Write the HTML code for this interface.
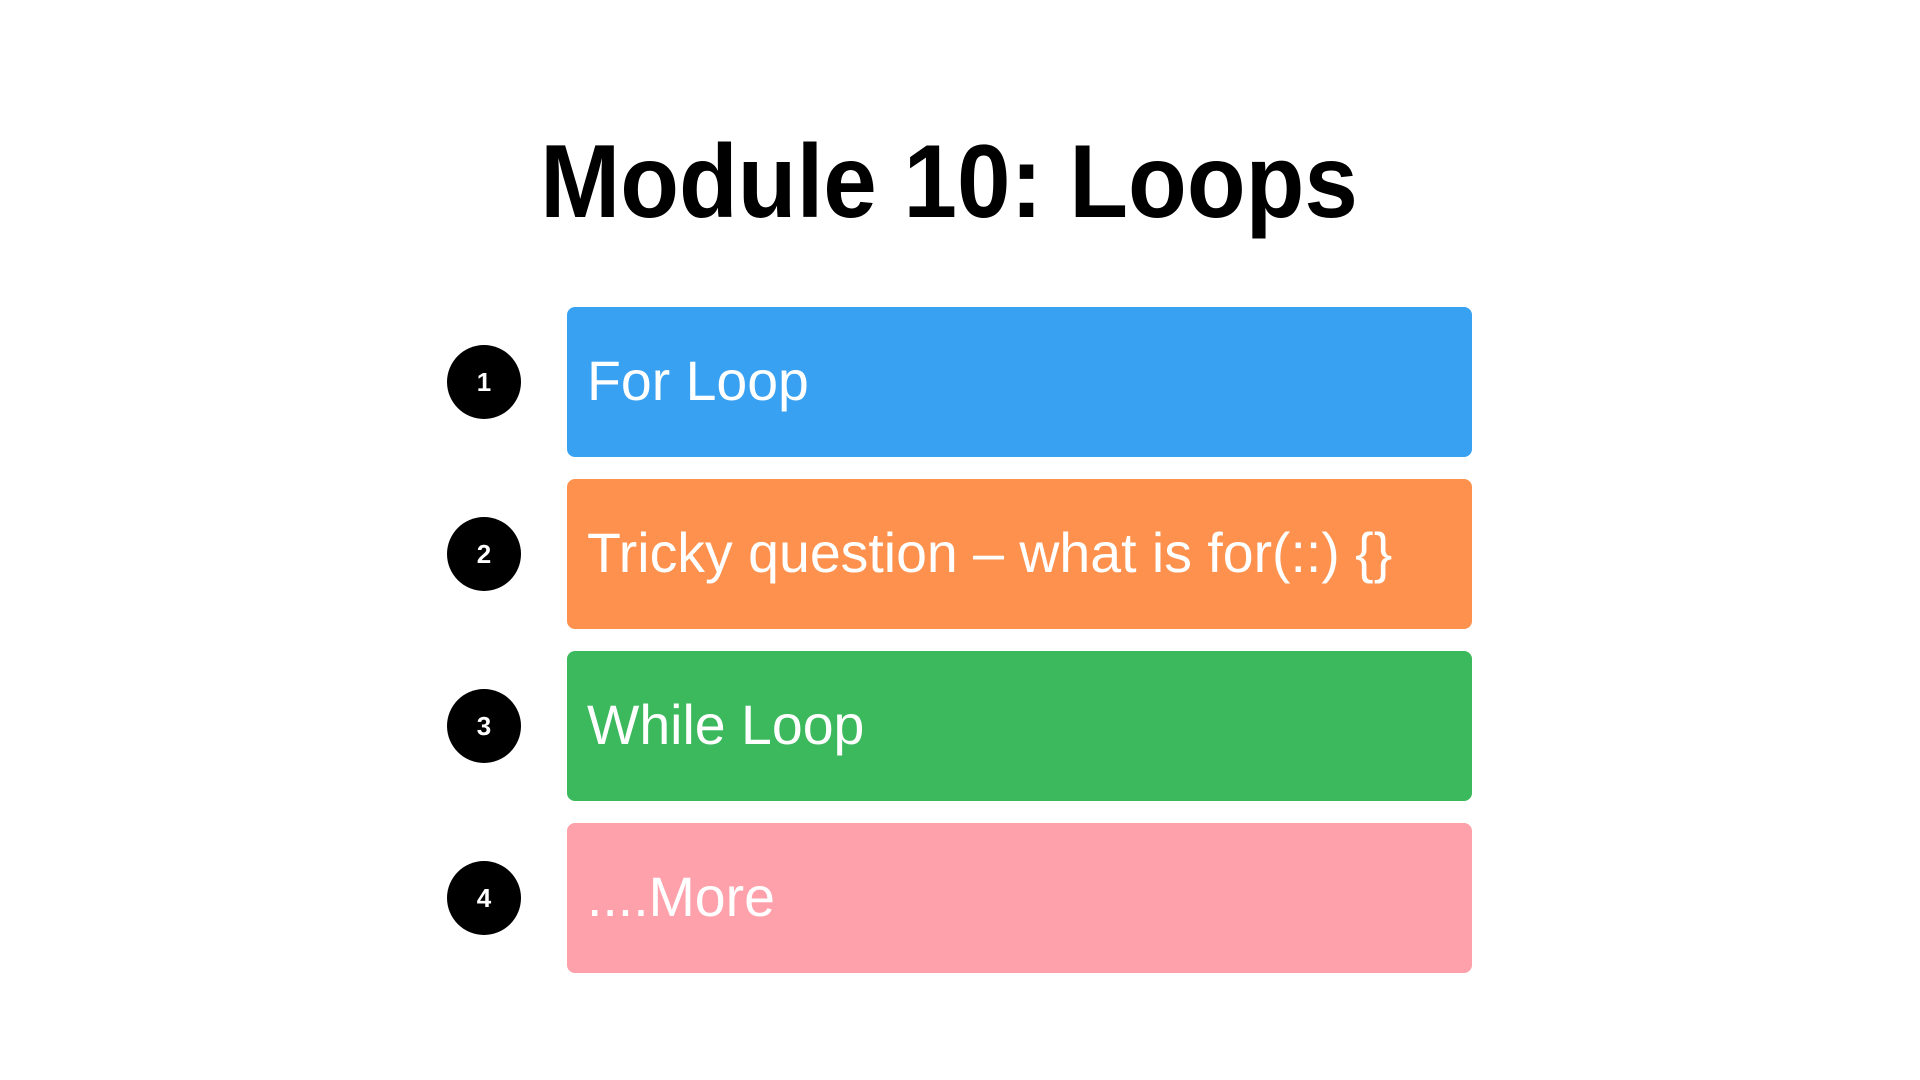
<!DOCTYPE html>
<html><head><style>
body{margin:0;width:1920px;height:1080px;background:#fff;position:relative;overflow:hidden;font-family:"Liberation Sans",sans-serif}
.t{position:absolute;left:-11px;width:1920px;top:122px;text-align:center;font-weight:bold;font-size:104px;line-height:120px;color:#000}
.t span{display:inline-block;transform:scaleX(0.925);transform-origin:center}
.b{position:absolute;left:567px;width:905px;height:150px;border-radius:8px}
.b span{position:absolute;left:20px;top:46px;font-size:56px;line-height:56px;color:#fff;white-space:nowrap;transform:scaleX(0.99);transform-origin:left}
.c{position:absolute;left:447px;width:74px;height:74px;border-radius:50%;background:#000;color:#fff;font-weight:bold;font-size:26px;line-height:74px;text-align:center}
</style></head><body>
<div class="t"><span>Module 10: Loops</span></div>
<div class="c" style="top:345px">1</div>
<div class="b" style="top:307px;background:#38a1f2"><span>For Loop</span></div>
<div class="c" style="top:517px">2</div>
<div class="b" style="top:479px;background:#fe914e"><span>Tricky question – what is for(::) {}</span></div>
<div class="c" style="top:689px">3</div>
<div class="b" style="top:651px;background:#3bb95c"><span>While Loop</span></div>
<div class="c" style="top:861px">4</div>
<div class="b" style="top:823px;background:#fea1ab"><span>....More</span></div>
</body></html>
